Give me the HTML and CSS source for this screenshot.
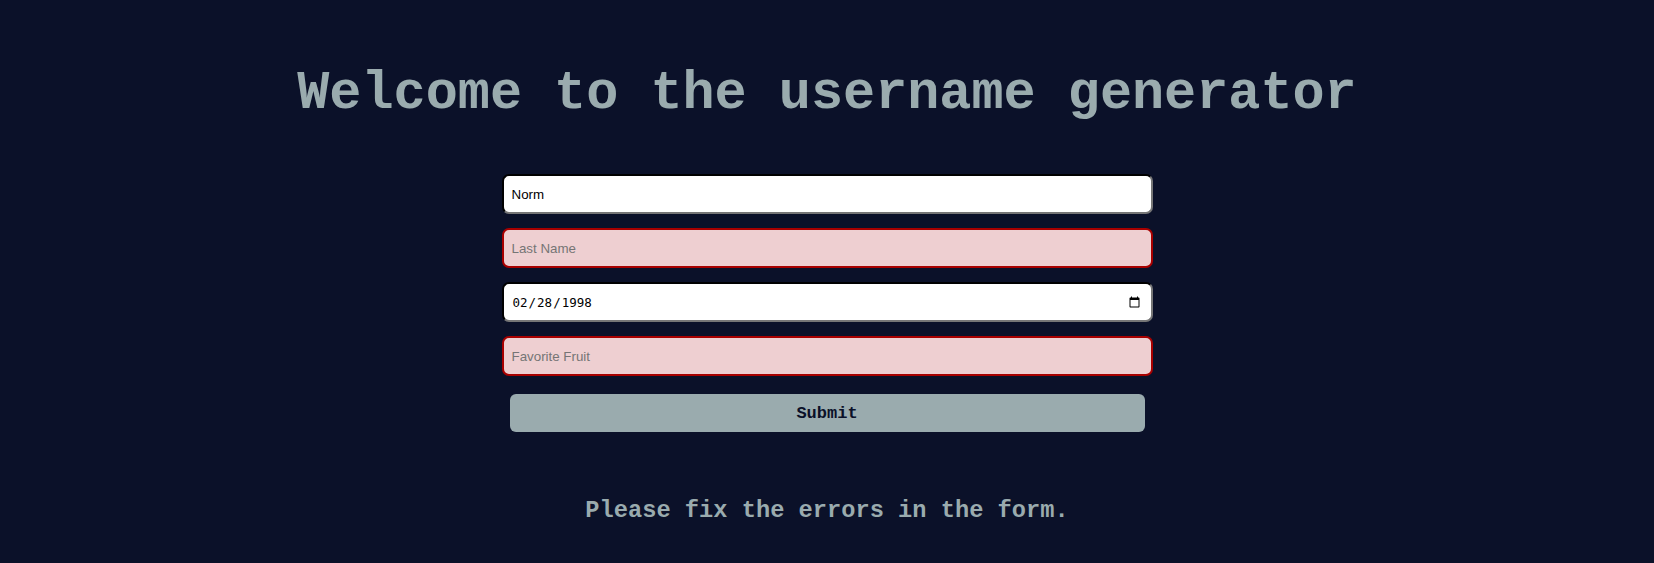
FILE: index.html
```html
<!DOCTYPE html>
<html lang="en">
<head>
<meta charset="utf-8">
<title>Username Generator</title>
<link rel="stylesheet" href="styles.css">
</head>
<body>
<main class="page">
  <h1 class="title">Welcome to the username generator</h1>
  <form class="form">
    <input class="field" type="text" placeholder="First Name" value="Norm">
    <input class="field field-error" type="text" placeholder="Last Name">
    <input class="field field-date" type="date" value="1998-02-28">
    <input class="field field-error" type="text" placeholder="Favorite Fruit">
    <button class="submit" type="button">Submit</button>
  </form>
  <p class="message">Please fix the errors in the form.</p>
</main>
</body>
</html>
```
FILE: styles.css
```css
html, body {
  margin: 0;
  padding: 0;
  background: #0b1129;
}
.page {
  display: flex;
  flex-direction: column;
  align-items: center;
  font-family: "Liberation Mono", "Courier New", monospace;
  color: #9aabae;
}
.title {
  margin: 59px 0 0;
  font-size: 53.5px;
  line-height: 70px;
  font-weight: bold;
}
.form {
  width: 651px;
  margin-top: 45px;
  display: flex;
  flex-direction: column;
  gap: 14px;
}
.field {
  box-sizing: border-box;
  height: 40px;
  width: 100%;
  margin: 0;
  padding: 0 8px;
  border: 2px inset #767676;
  border-top-color: #222;
  border-left-color: #222;
  border-radius: 7px;
  background: #fff;
  font-family: "Liberation Sans", Arial, sans-serif;
  font-size: 13.33px;
  color: #000;
  outline: none;
}
.field::placeholder {
  color: #757575;
}
.field-error {
  border: 2px solid #a80000;
  background: #eecfd1;
}
.field-date {
  font-family: "DejaVu Sans Mono", "Liberation Mono", monospace;
  font-size: 12.5px;
}
.submit {
  box-sizing: border-box;
  height: 38px;
  margin: 4px 8px 0;
  border: none;
  border-radius: 6px;
  background: #9aabae;
  font-family: "Liberation Mono", "Courier New", monospace;
  font-weight: bold;
  font-size: 17px;
  color: #0b1129;
  cursor: pointer;
}
.message {
  margin: 64px 0 0;
  font-size: 23.7px;
  font-weight: bold;
  line-height: 30px;
}
```
